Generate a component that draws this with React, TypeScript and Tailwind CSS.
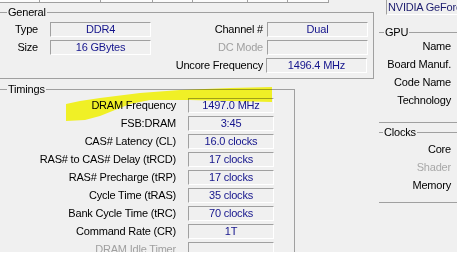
import React from "react";

const font = "font-['Liberation_Sans',Arial,sans-serif] text-[11px] leading-[13px] tracking-[-0.2px]";

function ValueBox({ value, w }: { value: string; w: string }) {
  return (
    <div
      className={`h-[15px] ${w} shrink-0 border border-[#a0a0a0] border-b-white border-r-white flex items-center justify-center whitespace-nowrap text-[#14148c]`}
    >
      {value}
    </div>
  );
}

const timings: [string, string, boolean?][] = [
  ["DRAM Frequency", "1497.0 MHz"],
  ["FSB:DRAM", "3:45"],
  ["CAS# Latency (CL)", "16.0 clocks"],
  ["RAS# to CAS# Delay (tRCD)", "17 clocks"],
  ["RAS# Precharge (tRP)", "17 clocks"],
  ["Cycle Time (tRAS)", "35 clocks"],
  ["Bank Cycle Time (tRC)", "70 clocks"],
  ["Command Rate (CR)", "1T"],
  ["DRAM Idle Timer", "", true],
];

const tabs = [39, 61, 52, 40, 55, 40, 42];

export default function App() {
  return (
    <div className={`relative w-[457px] h-[252px] overflow-hidden bg-[#f0f0f0] text-black ${font}`}>
      <div className="flex">
        {/* left window */}
        <div className="w-[374px] shrink-0 flex flex-col">
          <div className="flex h-[3px]">
            {tabs.map((w, i) => (
              <div
                key={i}
                style={{ width: w }}
                className={`h-[3px] bg-[#fbfbfb] border-b border-[#a0a0a0] ${i > 0 ? "border-l" : ""} ${i === tabs.length - 1 ? "border-r" : ""}`}
              />
            ))}
          </div>

          {/* General */}
          <fieldset className="mt-[3px] w-[374px] min-w-0 border-t border-r border-b border-[#a0a0a0] pt-[3px] pb-[5px]">
            <legend className="ml-[7px] px-[1px]">General</legend>
            <div className="flex flex-col gap-[3px]">
              <div className="flex items-center">
                <div className="w-[38px] text-right">Type</div>
                <div className="ml-[12px]"><ValueBox value="DDR4" w="w-[101px]" /></div>
                <div className="w-[112px] text-right">Channel #</div>
                <div className="ml-[4px]"><ValueBox value="Dual" w="w-[101px]" /></div>
              </div>
              <div className="flex items-center">
                <div className="w-[38px] text-right">Size</div>
                <div className="ml-[12px]"><ValueBox value="16 GBytes" w="w-[101px]" /></div>
                <div className="w-[112px] text-right text-[#a0a0a0]">DC Mode</div>
                <div className="ml-[4px]"><ValueBox value="" w="w-[101px]" /></div>
              </div>
              <div className="flex items-center">
                <div className="w-[263px] text-right">Uncore Frequency</div>
                <div className="ml-[3px]"><ValueBox value="1496.4 MHz" w="w-[101px]" /></div>
              </div>
            </div>
          </fieldset>

          {/* Timings */}
          <fieldset className="mt-[4px] w-[295px] min-w-0 border-t border-r border-[#a0a0a0] pt-[2px] pb-[20px]">
            <legend className="ml-[7px] px-[1px]">Timings</legend>
            <div className="flex flex-col gap-[3px]">
              {timings.map(([label, value, dim]) => (
                <div key={label} className="flex items-center">
                  <div className={`w-[176px] text-right whitespace-nowrap ${dim ? "text-[#a0a0a0]" : ""}`}>{label}</div>
                  <div className="ml-[12px]"><ValueBox value={value} w="w-[86px]" /></div>
                </div>
              ))}
            </div>
          </fieldset>
        </div>

        {/* right window */}
        <div className="flex-1 min-w-0 flex flex-col">
          <div className="ml-[12px] h-[15px] border-l border-b border-[#a0a0a0] border-b-white pl-[1px] flex items-center overflow-hidden whitespace-nowrap text-[#1c1c6e]">
            NVIDIA GeForce GTX 1080
          </div>
          <fieldset className="mt-[11px] ml-[5px] min-w-0 border-t border-b border-[#a0a0a0] pt-[1px] pb-[15px] pr-[6px]">
            <legend className="ml-[5px] pl-[1px] pr-[1px]">GPU</legend>
            <div className="flex flex-col gap-[5px] items-end whitespace-nowrap">
              <div>Name</div>
              <div>Board Manuf.</div>
              <div>Code Name</div>
              <div>Technology</div>
            </div>
          </fieldset>
          <fieldset className="mt-[3px] ml-[5px] min-w-0 border-t border-b border-[#a0a0a0] pt-[4px] pb-[10px] pr-[6px]">
            <legend className="ml-[4px] pl-[1px] pr-[1px]">Clocks</legend>
            <div className="flex flex-col gap-[5px] items-end whitespace-nowrap">
              <div>Core</div>
              <div className="text-[#a8a8a8]">Shader</div>
              <div>Memory</div>
            </div>
          </fieldset>
        </div>
      </div>

      {/* highlighter annotation */}
      <svg
        className="absolute left-0 top-0 pointer-events-none mix-blend-multiply"
        width="457"
        height="252"
        viewBox="0 0 457 252"
      >
        <polygon
          points="66,104 80,101 100,98 140,93 180,90 230,88 272,87 272,102 230,101 190,100 150,100 130,104 115,110 100,116 85,120 66,121"
          fill="#ffff28"
        />
      </svg>
    </div>
  );
}
